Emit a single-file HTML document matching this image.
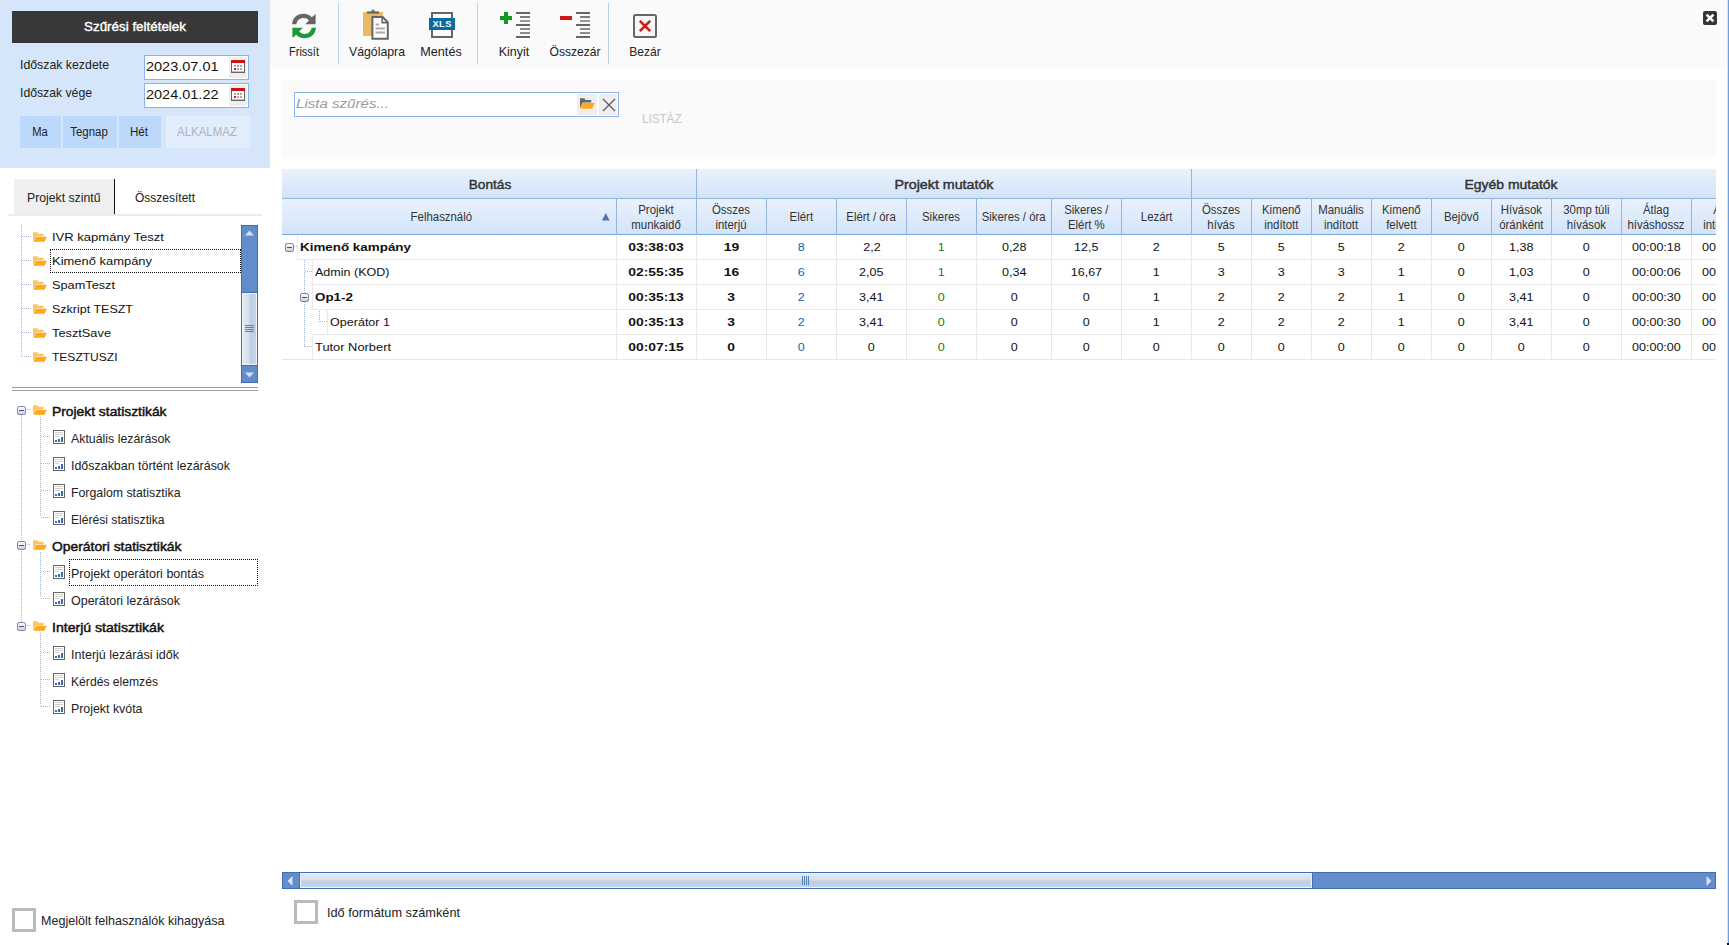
<!DOCTYPE html>
<html><head><meta charset="utf-8"><title>Statisztika</title>
<style>
html,body{margin:0;padding:0;background:#fff;}
body{width:1729px;height:945px;position:relative;overflow:hidden;font-family:"Liberation Sans",sans-serif;color:#222;}
.a{position:absolute;}
.t{position:absolute;white-space:nowrap;line-height:20px;height:20px;display:block;}
.dv{position:absolute;width:1px;background-image:linear-gradient(to bottom,#a9b9d3 1px,transparent 1px);background-size:1px 2px;}
.dh{position:absolute;height:1px;background-image:linear-gradient(to right,#a9b9d3 1px,transparent 1px);background-size:2px 1px;}
.hc{position:absolute;box-sizing:border-box;border-left:1px solid #94b5e0;text-align:center;color:#333;font-size:12px;line-height:15px;display:flex;align-items:center;justify-content:center;}
.dc{position:absolute;box-sizing:border-box;border-left:1px solid #e9e9e9;border-bottom:1px solid #e9e9e9;height:25px;text-align:center;font-size:11.5px;line-height:24px;color:#111;}
.hs{display:inline-block;transform:scaleX(0.95);white-space:nowrap;}
.dc span{display:inline-block;transform:scaleX(1.09);}
.dc.b span{transform:scaleX(1.205);}
.dc.b{font-weight:bold;}
.btn{position:absolute;background:#bcd8fa;}
</style></head><body>

<div class="a" style="left:0;top:0;width:270px;height:168px;background:#d5e6fb;"></div>
<div class="a" style="left:12px;top:11px;width:246px;height:32px;background:#383838;"></div>
<span id="title" class="t " style="font-size:13.5px;color:#fff;-webkit-text-stroke:0.4px #fff;left:134.5px;top:17.4px;transform-origin:0 50%;transform:translateX(-50%) scaleX(0.9921);transform-origin:50% 50%;">Szűrési feltételek</span>
<span id="lab1" class="t " style="font-size:13px;left:20px;top:55.0px;transform-origin:0 50%;transform:scaleX(0.9473);">Időszak kezdete</span>
<span id="lab2" class="t " style="font-size:13px;left:20px;top:83.0px;transform-origin:0 50%;transform:scaleX(0.9398);">Időszak vége</span>
<div class="a" style="left:144px;top:55px;width:103px;height:23px;border:1px solid #8ab3e8;background:#fff;"></div>
<div class="a" style="left:229px;top:57px;width:18px;height:21px;background:#eee;"></div>
<svg class="a" style="left:231px;top:60px" width="14" height="13" viewBox="0 0 14 13"><rect x="0.5" y="0.5" width="13" height="12" fill="#fff" stroke="#666"/><rect x="0" y="0" width="14" height="3" fill="#cc1414"/><rect x="0" y="11.6" width="14" height="1.4" fill="#666"/><g fill="#aaa"><rect x="3" y="5" width="2" height="2"/><rect x="6" y="5" width="2" height="2"/><rect x="9" y="5" width="2" height="2"/><rect x="6" y="8" width="2" height="2"/><rect x="9" y="8" width="2" height="2"/></g><rect x="3" y="8" width="2" height="2" fill="#dd1111"/></svg>
<span id="date0" class="t " style="font-size:12.5px;color:#111;left:146px;top:56.5px;transform-origin:0 50%;transform:scaleX(1.1588);">2023.07.01</span>
<div class="a" style="left:144px;top:83px;width:103px;height:23px;border:1px solid #8ab3e8;background:#fff;"></div>
<div class="a" style="left:229px;top:85px;width:18px;height:21px;background:#eee;"></div>
<svg class="a" style="left:231px;top:88px" width="14" height="13" viewBox="0 0 14 13"><rect x="0.5" y="0.5" width="13" height="12" fill="#fff" stroke="#666"/><rect x="0" y="0" width="14" height="3" fill="#cc1414"/><rect x="0" y="11.6" width="14" height="1.4" fill="#666"/><g fill="#aaa"><rect x="3" y="5" width="2" height="2"/><rect x="6" y="5" width="2" height="2"/><rect x="9" y="5" width="2" height="2"/><rect x="6" y="8" width="2" height="2"/><rect x="9" y="8" width="2" height="2"/></g><rect x="3" y="8" width="2" height="2" fill="#dd1111"/></svg>
<span id="date1" class="t " style="font-size:12.5px;color:#111;left:146px;top:84.5px;transform-origin:0 50%;transform:scaleX(1.1588);">2024.01.22</span>
<div class="btn" style="left:20px;top:116px;width:41px;height:32px;"></div>
<span id="bma" class="t " style="font-size:12.5px;color:#222;left:39.5px;top:122.0px;transform-origin:0 50%;transform:translateX(-50%) scaleX(0.8921);transform-origin:50% 50%;">Ma</span>
<div class="btn" style="left:63px;top:116px;width:54px;height:32px;"></div>
<span id="btg" class="t " style="font-size:12.5px;color:#222;left:89.0px;top:122.0px;transform-origin:0 50%;transform:translateX(-50%) scaleX(0.9143);transform-origin:50% 50%;">Tegnap</span>
<div class="btn" style="left:119px;top:116px;width:42px;height:32px;"></div>
<span id="bhet" class="t " style="font-size:12.5px;color:#222;left:139.0px;top:122.0px;transform-origin:0 50%;transform:translateX(-50%) scaleX(0.9253);transform-origin:50% 50%;">Hét</span>
<div class="btn" style="left:166px;top:116px;width:84px;height:32px;background:#e2edfc;"></div>
<span id="balk" class="t " style="font-size:12.5px;color:#aab4c3;left:207px;top:122.0px;transform-origin:0 50%;transform:translateX(-50%) scaleX(0.9187);transform-origin:50% 50%;">ALKALMAZ</span>
<div class="a" style="left:14px;top:179px;width:100px;height:35px;background:#efefef;"></div>
<div class="a" style="left:114px;top:179px;width:1px;height:35px;background:#111;"></div>
<div class="a" style="left:8px;top:214px;width:254px;height:2px;background:#ececec;"></div>
<span id="tab1" class="t " style="font-size:13px;left:27px;top:187.5px;transform-origin:0 50%;transform:scaleX(0.9417);">Projekt szintű</span>
<span id="tab2" class="t " style="font-size:13px;left:135px;top:187.5px;transform-origin:0 50%;transform:scaleX(0.9226);">Összesített</span>
<div class="dv" style="left:21px;top:225px;height:132px;"></div>
<div class="dh" style="left:22px;top:236px;width:9px;"></div>
<svg class="a" style="left:33px;top:232px" width="14.2" height="10.2" preserveAspectRatio="none" viewBox="0 0 15 11"><path d="M0 0.3 H4.6 L5.2 2 H11.2 V4.6 H2.8 L0 10 Z" fill="#ffc45a"/><path d="M2.9 5 H14.6 L12.2 10.4 H0.4 Z" fill="#ffa81c"/></svg>
<span id="pt0" class="t " style="font-size:11.5px;color:#111;left:52px;top:227.0px;transform-origin:0 50%;transform:scaleX(1.1329);">IVR kapmány Teszt</span>
<div class="dh" style="left:22px;top:260px;width:9px;"></div>
<svg class="a" style="left:33px;top:256px" width="14.2" height="10.2" preserveAspectRatio="none" viewBox="0 0 15 11"><path d="M0 0.3 H4.6 L5.2 2 H11.2 V4.6 H2.8 L0 10 Z" fill="#ffc45a"/><path d="M2.9 5 H14.6 L12.2 10.4 H0.4 Z" fill="#ffa81c"/></svg>
<span id="pt1" class="t " style="font-size:11.5px;color:#111;left:52px;top:251.0px;transform-origin:0 50%;transform:scaleX(1.1254);">Kimenő kampány</span>
<div class="dh" style="left:22px;top:284px;width:9px;"></div>
<svg class="a" style="left:33px;top:280px" width="14.2" height="10.2" preserveAspectRatio="none" viewBox="0 0 15 11"><path d="M0 0.3 H4.6 L5.2 2 H11.2 V4.6 H2.8 L0 10 Z" fill="#ffc45a"/><path d="M2.9 5 H14.6 L12.2 10.4 H0.4 Z" fill="#ffa81c"/></svg>
<span id="pt2" class="t " style="font-size:11.5px;color:#111;left:52px;top:275.0px;transform-origin:0 50%;transform:scaleX(1.1074);">SpamTeszt</span>
<div class="dh" style="left:22px;top:308px;width:9px;"></div>
<svg class="a" style="left:33px;top:304px" width="14.2" height="10.2" preserveAspectRatio="none" viewBox="0 0 15 11"><path d="M0 0.3 H4.6 L5.2 2 H11.2 V4.6 H2.8 L0 10 Z" fill="#ffc45a"/><path d="M2.9 5 H14.6 L12.2 10.4 H0.4 Z" fill="#ffa81c"/></svg>
<span id="pt3" class="t " style="font-size:11.5px;color:#111;left:52px;top:299.0px;transform-origin:0 50%;transform:scaleX(1.0863);">Szkript TESZT</span>
<div class="dh" style="left:22px;top:332px;width:9px;"></div>
<svg class="a" style="left:33px;top:328px" width="14.2" height="10.2" preserveAspectRatio="none" viewBox="0 0 15 11"><path d="M0 0.3 H4.6 L5.2 2 H11.2 V4.6 H2.8 L0 10 Z" fill="#ffc45a"/><path d="M2.9 5 H14.6 L12.2 10.4 H0.4 Z" fill="#ffa81c"/></svg>
<span id="pt4" class="t " style="font-size:11.5px;color:#111;left:52px;top:323.0px;transform-origin:0 50%;transform:scaleX(1.1119);">TesztSave</span>
<div class="dh" style="left:22px;top:356px;width:9px;"></div>
<svg class="a" style="left:33px;top:352px" width="14.2" height="10.2" preserveAspectRatio="none" viewBox="0 0 15 11"><path d="M0 0.3 H4.6 L5.2 2 H11.2 V4.6 H2.8 L0 10 Z" fill="#ffc45a"/><path d="M2.9 5 H14.6 L12.2 10.4 H0.4 Z" fill="#ffa81c"/></svg>
<span id="pt5" class="t " style="font-size:11.5px;color:#111;left:52px;top:347.0px;transform-origin:0 50%;transform:scaleX(1.0459);">TESZTUSZI</span>
<div class="a" style="left:50px;top:249px;width:189px;height:22px;border:1px dotted #111;"></div>
<div class="a" style="left:241px;top:225px;width:17px;height:158px;background:#638ccb;box-shadow:inset 0 0 0 1px #416db3;"></div>
<div class="a" style="left:241px;top:292px;width:17px;height:74px;background:#416db3;"></div>
<div class="a" style="left:242px;top:293px;width:15px;height:72px;background:linear-gradient(to right,#e2e9f3 0%,#d6e0ed 46%,#bfcfe3 54%,#c4d3e6 100%);box-shadow:inset 0 0 0 1px #eef2f8;"></div>
<svg class="a" style="left:245px;top:325px" width="9" height="8" viewBox="0 0 9 8"><path d="M0 0.5H9M0 2.5H9M0 4.5H9M0 6.5H9" stroke="#5b7fb8" stroke-width="1"/></svg>
<svg class="a" style="left:245px;top:230px" width="9" height="6" viewBox="0 0 9 6"><path d="M0 5.5 L4.5 0.5 L9 5.5 Z" fill="#d6e2f3"/></svg>
<svg class="a" style="left:245px;top:372px" width="9" height="6" viewBox="0 0 9 6"><path d="M0 0.5 L4.5 5.5 L9 0.5 Z" fill="#d6e2f3"/></svg>
<div class="a" style="left:12px;top:387px;width:246px;height:1px;background:#9a9a9a;"></div>
<div class="a" style="left:12px;top:390px;width:246px;height:1px;background:#a2a2a2;"></div>
<div class="dv" style="left:21px;top:415px;height:208px;"></div>
<svg class="a" style="left:17px;top:406px" width="9" height="9" viewBox="0 0 9 9"><defs><linearGradient id="cg1" x1="0" y1="0" x2="0" y2="1"><stop offset="0" stop-color="#fff"/><stop offset="1" stop-color="#c9cfe0"/></linearGradient></defs><rect x="0.5" y="0.5" width="8" height="8" rx="1.6" fill="url(#cg1)" stroke="#7c86a6"/><rect x="2" y="4" width="5" height="1" fill="#4a5274"/></svg>
<div class="dh" style="left:27px;top:409px;width:4px;"></div>
<svg class="a" style="left:33px;top:405px" width="14.2" height="10.2" preserveAspectRatio="none" viewBox="0 0 15 11"><path d="M0 0.3 H4.6 L5.2 2 H11.2 V4.6 H2.8 L0 10 Z" fill="#ffc45a"/><path d="M2.9 5 H14.6 L12.2 10.4 H0.4 Z" fill="#ffa81c"/></svg>
<span id="st0" class="t " style="font-size:13px;color:#111;-webkit-text-stroke:0.45px #111;left:52px;top:402.0px;transform-origin:0 50%;transform:scaleX(1.0636);">Projekt statisztikák</span>
<div class="dh" style="left:41px;top:436px;width:9px;"></div>
<svg class="a" style="left:53px;top:430px" width="12" height="14" viewBox="0 0 12 14"><rect x="0.5" y="0.5" width="11" height="13" fill="#fff" stroke="#666"/><path d="M2 2.5H10M2 4.5H10M2 6.5H6" stroke="#d0d0d0"/><rect x="2" y="10" width="2" height="2" fill="#3a6db3"/><rect x="5" y="9" width="2" height="3" fill="#3a6db3"/><rect x="8" y="7" width="2" height="5" fill="#3a6db3"/></svg>
<span id="st1" class="t " style="font-size:13px;color:#222;left:71px;top:429.0px;transform-origin:0 50%;transform:scaleX(0.9496);">Aktuális lezárások</span>
<div class="dh" style="left:41px;top:463px;width:9px;"></div>
<svg class="a" style="left:53px;top:457px" width="12" height="14" viewBox="0 0 12 14"><rect x="0.5" y="0.5" width="11" height="13" fill="#fff" stroke="#666"/><path d="M2 2.5H10M2 4.5H10M2 6.5H6" stroke="#d0d0d0"/><rect x="2" y="10" width="2" height="2" fill="#3a6db3"/><rect x="5" y="9" width="2" height="3" fill="#3a6db3"/><rect x="8" y="7" width="2" height="5" fill="#3a6db3"/></svg>
<span id="st2" class="t " style="font-size:13px;color:#222;left:71px;top:456.0px;transform-origin:0 50%;transform:scaleX(0.9566);">Időszakban történt lezárások</span>
<div class="dh" style="left:41px;top:490px;width:9px;"></div>
<svg class="a" style="left:53px;top:484px" width="12" height="14" viewBox="0 0 12 14"><rect x="0.5" y="0.5" width="11" height="13" fill="#fff" stroke="#666"/><path d="M2 2.5H10M2 4.5H10M2 6.5H6" stroke="#d0d0d0"/><rect x="2" y="10" width="2" height="2" fill="#3a6db3"/><rect x="5" y="9" width="2" height="3" fill="#3a6db3"/><rect x="8" y="7" width="2" height="5" fill="#3a6db3"/></svg>
<span id="st3" class="t " style="font-size:13px;color:#222;left:71px;top:483.0px;transform-origin:0 50%;transform:scaleX(0.9473);">Forgalom statisztika</span>
<div class="dh" style="left:41px;top:517px;width:9px;"></div>
<svg class="a" style="left:53px;top:511px" width="12" height="14" viewBox="0 0 12 14"><rect x="0.5" y="0.5" width="11" height="13" fill="#fff" stroke="#666"/><path d="M2 2.5H10M2 4.5H10M2 6.5H6" stroke="#d0d0d0"/><rect x="2" y="10" width="2" height="2" fill="#3a6db3"/><rect x="5" y="9" width="2" height="3" fill="#3a6db3"/><rect x="8" y="7" width="2" height="5" fill="#3a6db3"/></svg>
<span id="st4" class="t " style="font-size:13px;color:#222;left:71px;top:510.0px;transform-origin:0 50%;transform:scaleX(0.9311);">Elérési statisztika</span>
<svg class="a" style="left:17px;top:541px" width="9" height="9" viewBox="0 0 9 9"><defs><linearGradient id="cg2" x1="0" y1="0" x2="0" y2="1"><stop offset="0" stop-color="#fff"/><stop offset="1" stop-color="#c9cfe0"/></linearGradient></defs><rect x="0.5" y="0.5" width="8" height="8" rx="1.6" fill="url(#cg2)" stroke="#7c86a6"/><rect x="2" y="4" width="5" height="1" fill="#4a5274"/></svg>
<div class="dh" style="left:27px;top:544px;width:4px;"></div>
<svg class="a" style="left:33px;top:540px" width="14.2" height="10.2" preserveAspectRatio="none" viewBox="0 0 15 11"><path d="M0 0.3 H4.6 L5.2 2 H11.2 V4.6 H2.8 L0 10 Z" fill="#ffc45a"/><path d="M2.9 5 H14.6 L12.2 10.4 H0.4 Z" fill="#ffa81c"/></svg>
<span id="st5" class="t " style="font-size:13px;color:#111;-webkit-text-stroke:0.45px #111;left:52px;top:537.0px;transform-origin:0 50%;transform:scaleX(1.0669);">Operátori statisztikák</span>
<div class="dh" style="left:41px;top:571px;width:9px;"></div>
<svg class="a" style="left:53px;top:565px" width="12" height="14" viewBox="0 0 12 14"><rect x="0.5" y="0.5" width="11" height="13" fill="#fff" stroke="#666"/><path d="M2 2.5H10M2 4.5H10M2 6.5H6" stroke="#d0d0d0"/><rect x="2" y="10" width="2" height="2" fill="#3a6db3"/><rect x="5" y="9" width="2" height="3" fill="#3a6db3"/><rect x="8" y="7" width="2" height="5" fill="#3a6db3"/></svg>
<span id="st6" class="t " style="font-size:13px;color:#222;left:71px;top:564.0px;transform-origin:0 50%;transform:scaleX(0.9635);">Projekt operátori bontás</span>
<div class="dh" style="left:41px;top:598px;width:9px;"></div>
<svg class="a" style="left:53px;top:592px" width="12" height="14" viewBox="0 0 12 14"><rect x="0.5" y="0.5" width="11" height="13" fill="#fff" stroke="#666"/><path d="M2 2.5H10M2 4.5H10M2 6.5H6" stroke="#d0d0d0"/><rect x="2" y="10" width="2" height="2" fill="#3a6db3"/><rect x="5" y="9" width="2" height="3" fill="#3a6db3"/><rect x="8" y="7" width="2" height="5" fill="#3a6db3"/></svg>
<span id="st7" class="t " style="font-size:13px;color:#222;left:71px;top:591.0px;transform-origin:0 50%;transform:scaleX(0.9607);">Operátori lezárások</span>
<svg class="a" style="left:17px;top:622px" width="9" height="9" viewBox="0 0 9 9"><defs><linearGradient id="cg3" x1="0" y1="0" x2="0" y2="1"><stop offset="0" stop-color="#fff"/><stop offset="1" stop-color="#c9cfe0"/></linearGradient></defs><rect x="0.5" y="0.5" width="8" height="8" rx="1.6" fill="url(#cg3)" stroke="#7c86a6"/><rect x="2" y="4" width="5" height="1" fill="#4a5274"/></svg>
<div class="dh" style="left:27px;top:625px;width:4px;"></div>
<svg class="a" style="left:33px;top:621px" width="14.2" height="10.2" preserveAspectRatio="none" viewBox="0 0 15 11"><path d="M0 0.3 H4.6 L5.2 2 H11.2 V4.6 H2.8 L0 10 Z" fill="#ffc45a"/><path d="M2.9 5 H14.6 L12.2 10.4 H0.4 Z" fill="#ffa81c"/></svg>
<span id="st8" class="t " style="font-size:13px;color:#111;-webkit-text-stroke:0.45px #111;left:52px;top:618.0px;transform-origin:0 50%;transform:scaleX(1.0839);">Interjú statisztikák</span>
<div class="dh" style="left:41px;top:652px;width:9px;"></div>
<svg class="a" style="left:53px;top:646px" width="12" height="14" viewBox="0 0 12 14"><rect x="0.5" y="0.5" width="11" height="13" fill="#fff" stroke="#666"/><path d="M2 2.5H10M2 4.5H10M2 6.5H6" stroke="#d0d0d0"/><rect x="2" y="10" width="2" height="2" fill="#3a6db3"/><rect x="5" y="9" width="2" height="3" fill="#3a6db3"/><rect x="8" y="7" width="2" height="5" fill="#3a6db3"/></svg>
<span id="st9" class="t " style="font-size:13px;color:#222;left:71px;top:645.0px;transform-origin:0 50%;transform:scaleX(0.9643);">Interjú lezárási idők</span>
<div class="dh" style="left:41px;top:679px;width:9px;"></div>
<svg class="a" style="left:53px;top:673px" width="12" height="14" viewBox="0 0 12 14"><rect x="0.5" y="0.5" width="11" height="13" fill="#fff" stroke="#666"/><path d="M2 2.5H10M2 4.5H10M2 6.5H6" stroke="#d0d0d0"/><rect x="2" y="10" width="2" height="2" fill="#3a6db3"/><rect x="5" y="9" width="2" height="3" fill="#3a6db3"/><rect x="8" y="7" width="2" height="5" fill="#3a6db3"/></svg>
<span id="st10" class="t " style="font-size:13px;color:#222;left:71px;top:672.0px;transform-origin:0 50%;transform:scaleX(0.9333);">Kérdés elemzés</span>
<div class="dh" style="left:41px;top:706px;width:9px;"></div>
<svg class="a" style="left:53px;top:700px" width="12" height="14" viewBox="0 0 12 14"><rect x="0.5" y="0.5" width="11" height="13" fill="#fff" stroke="#666"/><path d="M2 2.5H10M2 4.5H10M2 6.5H6" stroke="#d0d0d0"/><rect x="2" y="10" width="2" height="2" fill="#3a6db3"/><rect x="5" y="9" width="2" height="3" fill="#3a6db3"/><rect x="8" y="7" width="2" height="5" fill="#3a6db3"/></svg>
<span id="st11" class="t " style="font-size:13px;color:#222;left:71px;top:699.0px;transform-origin:0 50%;transform:scaleX(0.9514);">Projekt kvóta</span>
<div class="dv" style="left:40px;top:417px;height:100px;"></div>
<div class="dv" style="left:40px;top:552px;height:46px;"></div>
<div class="dv" style="left:40px;top:633px;height:73px;"></div>
<div class="a" style="left:69px;top:559px;width:187px;height:25px;border:1px dotted #111;"></div>
<div class="a" style="left:12px;top:908px;width:18px;height:18px;border:3px solid #bababa;background:#fff;"></div>
<span id="cb1" class="t " style="font-size:13px;color:#222;left:41px;top:910.5px;transform-origin:0 50%;transform:scaleX(0.9655);">Megjelölt felhasználók kihagyása</span>
<div class="a" style="left:270px;top:0;width:1457px;height:68px;background:#fafafa;"></div>
<div class="a" style="left:338px;top:3px;width:1px;height:61px;background:#b9cfea;"></div>
<div class="a" style="left:477px;top:3px;width:1px;height:61px;background:#b9cfea;"></div>
<div class="a" style="left:608px;top:3px;width:1px;height:61px;background:#b9cfea;"></div>
<span id="tb1" class="t " style="font-size:13px;color:#222;left:304px;top:41.5px;transform-origin:0 50%;transform:translateX(-50%) scaleX(0.8477);transform-origin:50% 50%;">Frissít</span>
<span id="tb2" class="t " style="font-size:13px;color:#222;left:377px;top:41.5px;transform-origin:0 50%;transform:translateX(-50%) scaleX(0.9446);transform-origin:50% 50%;">Vágólapra</span>
<span id="tb3" class="t " style="font-size:13px;color:#222;left:440.7px;top:41.5px;transform-origin:0 50%;transform:translateX(-50%) scaleX(0.9733);transform-origin:50% 50%;">Mentés</span>
<span id="tb4" class="t " style="font-size:13px;color:#222;left:514.2px;top:41.5px;transform-origin:0 50%;transform:translateX(-50%) scaleX(0.9592);transform-origin:50% 50%;">Kinyit</span>
<span id="tb5" class="t " style="font-size:13px;color:#222;left:574.5px;top:41.5px;transform-origin:0 50%;transform:translateX(-50%) scaleX(0.9289);transform-origin:50% 50%;">Összezár</span>
<span id="tb6" class="t " style="font-size:13px;color:#222;left:644.7px;top:41.5px;transform-origin:0 50%;transform:translateX(-50%) scaleX(0.9273);transform-origin:50% 50%;">Bezár</span>
<svg class="a" style="left:291px;top:13px" width="26" height="26" viewBox="0 0 26 26">
<path transform="translate(0,-0.7)" d="M1 12 C1.5 5.5 6.5 1.5 12.5 1.5 C16 1.5 18.8 2.8 20.8 5 L24.6 1.6 V12 H14.2 L17.9 8.1 C16.4 6.6 14.6 5.8 12.5 5.8 C8.8 5.8 6 8.3 5.4 12 Z" fill="#666"/>
<path transform="translate(0,0.7)" d="M25 14 C24.5 20.5 19.5 24.5 13.5 24.5 C10 24.5 7.2 23.2 5.2 21 L1.4 24.4 V14 H11.8 L8.1 17.9 C9.6 19.4 11.4 20.2 13.5 20.2 C17.2 20.2 20 17.7 20.6 14 Z" fill="#1c9a3a"/>
</svg>
<svg class="a" style="left:362px;top:9px" width="28" height="32" viewBox="0 0 28 32">
<rect x="1" y="3" width="20" height="24" fill="#e9b964"/>
<rect x="5" y="2.4" width="12" height="2.2" fill="#666"/><rect x="9.6" y="0.8" width="2.8" height="2.4" fill="#666"/>
<path d="M10.4 8 H20.6 L25.8 13.2 V29.8 H10.4 Z" fill="#fff" stroke="#666" stroke-width="2"/>
<path d="M20.2 8.4 V13.6 H25.6" fill="none" stroke="#666" stroke-width="1.6"/>
<path d="M13.5 15.5H17M13.5 19.5H23M13.5 23.5H23" stroke="#aaa" stroke-width="2"/>
</svg>
<svg class="a" style="left:428px;top:11px" width="28" height="28" viewBox="0 0 28 28">
<rect x="4" y="2" width="20" height="24" fill="#fafafa" stroke="#666" stroke-width="2"/>
<rect x="1" y="7" width="26" height="12" fill="#0b6a9f"/>
<text x="14.2" y="16.4" text-anchor="middle" font-family="Liberation Sans, sans-serif" font-weight="bold" font-size="9.3" fill="#fff" letter-spacing="0.5">XLS</text>
</svg>
<svg class="a" style="left:500px;top:12px" width="31" height="26" viewBox="0 0 31 26"><rect x="4" y="0" width="4" height="12" fill="#149a22"/><rect x="0" y="4" width="12" height="4" fill="#149a22"/><g><rect x="16" y="0" width="14" height="2" fill="#666"/><rect x="20" y="4" width="10" height="2" fill="#7d7d7d"/><rect x="20" y="8" width="10" height="2" fill="#9a9a9a"/><rect x="16" y="12" width="14" height="2" fill="#666"/><rect x="20" y="16" width="10" height="2" fill="#8a8a8a"/><rect x="20" y="20" width="10" height="2" fill="#8a8a8a"/><rect x="16" y="24" width="14" height="2" fill="#666"/></g></svg>
<svg class="a" style="left:560px;top:12px" width="31" height="26" viewBox="0 0 31 26"><rect x="0" y="4" width="12" height="4" fill="#d01818"/><g><rect x="16" y="0" width="14" height="2" fill="#666"/><rect x="20" y="4" width="10" height="2" fill="#7d7d7d"/><rect x="20" y="8" width="10" height="2" fill="#9a9a9a"/><rect x="16" y="12" width="14" height="2" fill="#666"/><rect x="20" y="16" width="10" height="2" fill="#8a8a8a"/><rect x="20" y="20" width="10" height="2" fill="#8a8a8a"/><rect x="16" y="24" width="14" height="2" fill="#666"/></g></svg>
<svg class="a" style="left:633px;top:14px" width="24" height="24" viewBox="0 0 24 24"><rect x="1" y="1" width="22" height="22" rx="1.5" fill="#f7f7f7" stroke="#666" stroke-width="2"/><path d="M6.8 6.8 L17.2 17.2 M17.2 6.8 L6.8 17.2" stroke="#cc1a1a" stroke-width="2.6"/></svg>
<svg class="a" style="left:1703px;top:11px" width="14" height="14" viewBox="0 0 14 14"><rect width="14" height="14" rx="2" fill="#363636"/><path d="M3.6 3.6 L10.4 10.4 M10.4 3.6 L3.6 10.4" stroke="#fff" stroke-width="2.6"/></svg>
<div class="a" style="left:1727px;top:0;width:1px;height:945px;background:#d9e5f6;"></div>
<div class="a" style="left:1728px;top:0;width:1px;height:945px;background:#6f9fdb;"></div>
<div class="a" style="left:282px;top:80px;width:1434px;height:77px;background:#fafafa;"></div>
<div class="a" style="left:294px;top:92px;width:323px;height:23px;border:1px solid #8ab3e8;background:#fff;"></div>
<span id="flt" class="t " style="font-size:12.5px;color:#9a9a9a;font-style:italic;left:296px;top:94.0px;transform-origin:0 50%;transform:scaleX(1.2058);">Lista szűrés...</span>
<div class="a" style="left:577px;top:94px;width:20px;height:21px;background:#eee;"></div>
<div class="a" style="left:599px;top:94px;width:18px;height:21px;background:#eee;"></div>
<svg class="a" style="left:580px;top:98px" width="15" height="12" viewBox="0 0 15 12"><path d="M0 0.3 H4.6 L5.2 2 H11.2 V4.6 H2.8 L0 10 Z" fill="#666"/><path d="M2.9 5 H14.6 L12.2 10.8 H0.4 Z" fill="#ffa81c"/></svg>
<svg class="a" style="left:602px;top:98px" width="14" height="14" viewBox="0 0 14 14"><path d="M1 1 L13 13 M13 1 L1 13" stroke="#5c5c5c" stroke-width="1.3"/></svg>
<span id="listaz" class="t " style="font-size:12.5px;color:#c4c8cc;left:641.7px;top:108.8px;transform-origin:0 50%;transform:scaleX(0.9322);">LISTÁZ</span>
<div class="a" style="left:282px;top:169px;width:1434px;height:66px;overflow:hidden;">
<div class="a" style="left:0;top:0;width:1434px;height:30px;background:linear-gradient(to bottom,#e9f2fc 0%,#dbe9fa 60%,#d2e3f8 100%);"></div>
<div class="a" style="left:0;top:30px;width:1434px;height:36px;background:linear-gradient(to bottom,#e9f2fc 0%,#dbe9fa 60%,#d2e3f8 100%);"></div>
<div class="a" style="left:0;top:29px;width:1434px;height:1px;background:#94b5e0;"></div>
<div class="a" style="left:0;top:65px;width:1434px;height:1px;background:#7fa6da;"></div>
<div class="hc" style="left:0px;top:0;width:414px;height:30px;border-left:none;"></div>
<div class="hc" style="left:414px;top:0;width:495px;height:30px;"></div>
<div class="hc" style="left:909px;top:0;width:638px;height:30px;"></div>
<div class="hc" style="left:0px;top:30px;width:334px;height:36px;padding-top:1px;border-left:none;padding-right:16px;"><span class="hs">Felhasználó</span></div>
<div class="hc" style="left:334px;top:30px;width:80px;height:36px;padding-top:2px;"><span class="hs">Projekt<br>munkaidő</span></div>
<div class="hc" style="left:414px;top:30px;width:70px;height:36px;padding-top:2px;"><span class="hs">Összes<br>interjú</span></div>
<div class="hc" style="left:484px;top:30px;width:70px;height:36px;padding-top:1px;"><span class="hs">Elért</span></div>
<div class="hc" style="left:554px;top:30px;width:70px;height:36px;padding-top:1px;"><span class="hs">Elért / óra</span></div>
<div class="hc" style="left:624px;top:30px;width:70px;height:36px;padding-top:1px;"><span class="hs">Sikeres</span></div>
<div class="hc" style="left:694px;top:30px;width:75px;height:36px;padding-top:1px;"><span class="hs">Sikeres / óra</span></div>
<div class="hc" style="left:769px;top:30px;width:70px;height:36px;padding-top:2px;"><span class="hs">Sikeres /<br>Elért %</span></div>
<div class="hc" style="left:839px;top:30px;width:70px;height:36px;padding-top:1px;"><span class="hs">Lezárt</span></div>
<div class="hc" style="left:909px;top:30px;width:60px;height:36px;padding-top:2px;"><span class="hs">Összes<br>hívás</span></div>
<div class="hc" style="left:969px;top:30px;width:60px;height:36px;padding-top:2px;"><span class="hs">Kimenő<br>indított</span></div>
<div class="hc" style="left:1029px;top:30px;width:60px;height:36px;padding-top:2px;"><span class="hs">Manuális<br>indított</span></div>
<div class="hc" style="left:1089px;top:30px;width:60px;height:36px;padding-top:2px;"><span class="hs">Kimenő<br>felvett</span></div>
<div class="hc" style="left:1149px;top:30px;width:60px;height:36px;padding-top:1px;"><span class="hs">Bejövő</span></div>
<div class="hc" style="left:1209px;top:30px;width:60px;height:36px;padding-top:2px;"><span class="hs">Hívások<br>óránként</span></div>
<div class="hc" style="left:1269px;top:30px;width:70px;height:36px;padding-top:2px;"><span class="hs">30mp túli<br>hívások</span></div>
<div class="hc" style="left:1339px;top:30px;width:70px;height:36px;padding-top:2px;"><span class="hs">Átlag<br>híváshossz</span></div>
<div class="hc" style="left:1409px;top:30px;width:70px;height:36px;padding-top:2px;"><span class="hs">Átlag<br>interjúidő</span></div>
<svg class="a" style="left:320px;top:44px" width="8" height="8" viewBox="0 0 8 8"><path d="M0 7.5 L3.8 0 L7.6 7.5 Z" fill="#4f72a8"/></svg>
</div>
<span id="gh1" class="t " style="font-size:13.5px;color:#333;-webkit-text-stroke:0.45px #333;left:489.5px;top:174.5px;transform-origin:0 50%;transform:translateX(-50%) scaleX(1.0112);transform-origin:50% 50%;">Bontás</span>
<span id="gh2" class="t " style="font-size:13.5px;color:#333;-webkit-text-stroke:0.45px #333;left:944px;top:174.5px;transform-origin:0 50%;transform:translateX(-50%) scaleX(1.0555);transform-origin:50% 50%;">Projekt mutatók</span>
<span id="gh3" class="t " style="font-size:13.5px;color:#333;-webkit-text-stroke:0.45px #333;left:1511.4px;top:174.5px;transform-origin:0 50%;transform:translateX(-50%) scaleX(1.0326);transform-origin:50% 50%;">Egyéb mutatók</span>
<div class="a" style="left:282px;top:235px;width:1434px;height:125px;overflow:hidden;">
<div class="dv" style="left:22px;top:25px;height:87px;"></div>
<div class="dh" style="left:23px;top:36px;width:7px;"></div>
<div class="dh" style="left:23px;top:111px;width:7px;"></div>
<div class="dv" style="left:37px;top:76px;height:11px;"></div>
<div class="dh" style="left:38px;top:86px;width:7px;"></div>
<div class="dc" style="left:15px;top:0px;width:319px;"></div>
<svg class="a" style="left:3px;top:8px" width="9" height="9" viewBox="0 0 9 9"><defs><linearGradient id="cg4" x1="0" y1="0" x2="0" y2="1"><stop offset="0" stop-color="#fff"/><stop offset="1" stop-color="#c9cfe0"/></linearGradient></defs><rect x="0.5" y="0.5" width="8" height="8" rx="1.6" fill="url(#cg4)" stroke="#7c86a6"/><rect x="2" y="4" width="5" height="1" fill="#4a5274"/></svg>
<div class="dc b" style="left:334px;top:0px;width:80px;"><span>03:38:03</span></div>
<div class="dc b" style="left:414px;top:0px;width:70px;"><span>19</span></div>
<div class="dc" style="left:484px;top:0px;width:70px;color:#1a5fb4;"><span>8</span></div>
<div class="dc" style="left:554px;top:0px;width:70px;"><span>2,2</span></div>
<div class="dc" style="left:624px;top:0px;width:70px;color:#1a7a1a;"><span>1</span></div>
<div class="dc" style="left:694px;top:0px;width:75px;"><span>0,28</span></div>
<div class="dc" style="left:769px;top:0px;width:70px;"><span>12,5</span></div>
<div class="dc" style="left:839px;top:0px;width:70px;"><span>2</span></div>
<div class="dc" style="left:909px;top:0px;width:60px;"><span>5</span></div>
<div class="dc" style="left:969px;top:0px;width:60px;"><span>5</span></div>
<div class="dc" style="left:1029px;top:0px;width:60px;"><span>5</span></div>
<div class="dc" style="left:1089px;top:0px;width:60px;"><span>2</span></div>
<div class="dc" style="left:1149px;top:0px;width:60px;"><span>0</span></div>
<div class="dc" style="left:1209px;top:0px;width:60px;"><span>1,38</span></div>
<div class="dc" style="left:1269px;top:0px;width:70px;"><span>0</span></div>
<div class="dc" style="left:1339px;top:0px;width:70px;"><span>00:00:18</span></div>
<div class="dc" style="left:1409px;top:0px;width:70px;"><span>00:00:00</span></div>
<div class="dc" style="left:30px;top:25px;width:304px;"></div>
<div class="dc b" style="left:334px;top:25px;width:80px;"><span>02:55:35</span></div>
<div class="dc b" style="left:414px;top:25px;width:70px;"><span>16</span></div>
<div class="dc" style="left:484px;top:25px;width:70px;color:#1a5fb4;"><span>6</span></div>
<div class="dc" style="left:554px;top:25px;width:70px;"><span>2,05</span></div>
<div class="dc" style="left:624px;top:25px;width:70px;color:#1a7a1a;"><span>1</span></div>
<div class="dc" style="left:694px;top:25px;width:75px;"><span>0,34</span></div>
<div class="dc" style="left:769px;top:25px;width:70px;"><span>16,67</span></div>
<div class="dc" style="left:839px;top:25px;width:70px;"><span>1</span></div>
<div class="dc" style="left:909px;top:25px;width:60px;"><span>3</span></div>
<div class="dc" style="left:969px;top:25px;width:60px;"><span>3</span></div>
<div class="dc" style="left:1029px;top:25px;width:60px;"><span>3</span></div>
<div class="dc" style="left:1089px;top:25px;width:60px;"><span>1</span></div>
<div class="dc" style="left:1149px;top:25px;width:60px;"><span>0</span></div>
<div class="dc" style="left:1209px;top:25px;width:60px;"><span>1,03</span></div>
<div class="dc" style="left:1269px;top:25px;width:70px;"><span>0</span></div>
<div class="dc" style="left:1339px;top:25px;width:70px;"><span>00:00:06</span></div>
<div class="dc" style="left:1409px;top:25px;width:70px;"><span>00:00:00</span></div>
<div class="dc" style="left:30px;top:50px;width:304px;"></div>
<svg class="a" style="left:18px;top:58px" width="9" height="9" viewBox="0 0 9 9"><defs><linearGradient id="cg5" x1="0" y1="0" x2="0" y2="1"><stop offset="0" stop-color="#fff"/><stop offset="1" stop-color="#c9cfe0"/></linearGradient></defs><rect x="0.5" y="0.5" width="8" height="8" rx="1.6" fill="url(#cg5)" stroke="#7c86a6"/><rect x="2" y="4" width="5" height="1" fill="#4a5274"/></svg>
<div class="dc b" style="left:334px;top:50px;width:80px;"><span>00:35:13</span></div>
<div class="dc b" style="left:414px;top:50px;width:70px;"><span>3</span></div>
<div class="dc" style="left:484px;top:50px;width:70px;color:#1a5fb4;"><span>2</span></div>
<div class="dc" style="left:554px;top:50px;width:70px;"><span>3,41</span></div>
<div class="dc" style="left:624px;top:50px;width:70px;color:#1a7a1a;"><span>0</span></div>
<div class="dc" style="left:694px;top:50px;width:75px;"><span>0</span></div>
<div class="dc" style="left:769px;top:50px;width:70px;"><span>0</span></div>
<div class="dc" style="left:839px;top:50px;width:70px;"><span>1</span></div>
<div class="dc" style="left:909px;top:50px;width:60px;"><span>2</span></div>
<div class="dc" style="left:969px;top:50px;width:60px;"><span>2</span></div>
<div class="dc" style="left:1029px;top:50px;width:60px;"><span>2</span></div>
<div class="dc" style="left:1089px;top:50px;width:60px;"><span>1</span></div>
<div class="dc" style="left:1149px;top:50px;width:60px;"><span>0</span></div>
<div class="dc" style="left:1209px;top:50px;width:60px;"><span>3,41</span></div>
<div class="dc" style="left:1269px;top:50px;width:70px;"><span>0</span></div>
<div class="dc" style="left:1339px;top:50px;width:70px;"><span>00:00:30</span></div>
<div class="dc" style="left:1409px;top:50px;width:70px;"><span>00:00:00</span></div>
<div class="dc" style="left:45px;top:75px;width:289px;"></div>
<div class="dc b" style="left:334px;top:75px;width:80px;"><span>00:35:13</span></div>
<div class="dc b" style="left:414px;top:75px;width:70px;"><span>3</span></div>
<div class="dc" style="left:484px;top:75px;width:70px;color:#1a5fb4;"><span>2</span></div>
<div class="dc" style="left:554px;top:75px;width:70px;"><span>3,41</span></div>
<div class="dc" style="left:624px;top:75px;width:70px;color:#1a7a1a;"><span>0</span></div>
<div class="dc" style="left:694px;top:75px;width:75px;"><span>0</span></div>
<div class="dc" style="left:769px;top:75px;width:70px;"><span>0</span></div>
<div class="dc" style="left:839px;top:75px;width:70px;"><span>1</span></div>
<div class="dc" style="left:909px;top:75px;width:60px;"><span>2</span></div>
<div class="dc" style="left:969px;top:75px;width:60px;"><span>2</span></div>
<div class="dc" style="left:1029px;top:75px;width:60px;"><span>2</span></div>
<div class="dc" style="left:1089px;top:75px;width:60px;"><span>1</span></div>
<div class="dc" style="left:1149px;top:75px;width:60px;"><span>0</span></div>
<div class="dc" style="left:1209px;top:75px;width:60px;"><span>3,41</span></div>
<div class="dc" style="left:1269px;top:75px;width:70px;"><span>0</span></div>
<div class="dc" style="left:1339px;top:75px;width:70px;"><span>00:00:30</span></div>
<div class="dc" style="left:1409px;top:75px;width:70px;"><span>00:00:00</span></div>
<div class="dc" style="left:30px;top:100px;width:304px;"></div>
<div class="dc b" style="left:334px;top:100px;width:80px;"><span>00:07:15</span></div>
<div class="dc b" style="left:414px;top:100px;width:70px;"><span>0</span></div>
<div class="dc" style="left:484px;top:100px;width:70px;color:#1a5fb4;"><span>0</span></div>
<div class="dc" style="left:554px;top:100px;width:70px;"><span>0</span></div>
<div class="dc" style="left:624px;top:100px;width:70px;color:#1a7a1a;"><span>0</span></div>
<div class="dc" style="left:694px;top:100px;width:75px;"><span>0</span></div>
<div class="dc" style="left:769px;top:100px;width:70px;"><span>0</span></div>
<div class="dc" style="left:839px;top:100px;width:70px;"><span>0</span></div>
<div class="dc" style="left:909px;top:100px;width:60px;"><span>0</span></div>
<div class="dc" style="left:969px;top:100px;width:60px;"><span>0</span></div>
<div class="dc" style="left:1029px;top:100px;width:60px;"><span>0</span></div>
<div class="dc" style="left:1089px;top:100px;width:60px;"><span>0</span></div>
<div class="dc" style="left:1149px;top:100px;width:60px;"><span>0</span></div>
<div class="dc" style="left:1209px;top:100px;width:60px;"><span>0</span></div>
<div class="dc" style="left:1269px;top:100px;width:70px;"><span>0</span></div>
<div class="dc" style="left:1339px;top:100px;width:70px;"><span>00:00:00</span></div>
<div class="dc" style="left:1409px;top:100px;width:70px;"><span>00:00:00</span></div>
<div class="a" style="left:30px;top:99px;width:15px;height:1px;background:#e6e6e6;"></div>
<div class="a" style="left:0px;top:124px;width:30px;height:1px;background:#e6e6e6;"></div>
<div class="dh" style="left:12px;top:11px;width:3px;"></div>
</div>
<span id="gr0" class="t " style="font-size:11.5px;color:#111;font-weight:bold;left:299.5px;top:237.0px;transform-origin:0 50%;transform:scaleX(1.1655);">Kimenő kampány</span>
<span id="gr1" class="t " style="font-size:11.5px;color:#111;left:314.5px;top:262.0px;transform-origin:0 50%;transform:scaleX(1.0896);">Admin (KOD)</span>
<span id="gr2" class="t " style="font-size:11.5px;color:#111;font-weight:bold;left:314.5px;top:287.0px;transform-origin:0 50%;transform:scaleX(1.1659);">Op1-2</span>
<span id="gr3" class="t " style="font-size:11.5px;color:#111;left:329.5px;top:312.0px;transform-origin:0 50%;transform:scaleX(1.0912);">Operátor 1</span>
<span id="gr4" class="t " style="font-size:11.5px;color:#111;left:314.5px;top:337.0px;transform-origin:0 50%;transform:scaleX(1.1182);">Tutor Norbert</span>
<div class="a" style="left:282px;top:872px;width:1434px;height:17px;background:#638ccb;box-shadow:inset 0 0 0 1px #416db3;"></div>
<div class="a" style="left:299px;top:872px;width:1014px;height:17px;background:#416db3;"></div>
<div class="a" style="left:300px;top:873px;width:1012px;height:15px;background:linear-gradient(to bottom,#e2e9f3 0%,#d6e0ed 46%,#bfcfe3 54%,#c4d3e6 100%);box-shadow:inset 0 0 0 1px #eef2f8;"></div>
<svg class="a" style="left:802px;top:876px" width="8" height="9" viewBox="0 0 8 9"><path d="M0.5 0V9M2.5 0V9M4.5 0V9M6.5 0V9" stroke="#5b7fb8" stroke-width="1"/></svg>
<svg class="a" style="left:287px;top:876px" width="6" height="10" viewBox="0 0 6 10"><path d="M5.5 0 L0.5 5 L5.5 10 Z" fill="#d6e2f3"/></svg>
<svg class="a" style="left:1706px;top:876px" width="6" height="10" viewBox="0 0 6 10"><path d="M0.5 0 L5.5 5 L0.5 10 Z" fill="#d6e2f3"/></svg>
<div class="a" style="left:294px;top:900px;width:18px;height:18px;border:3px solid #bababa;background:#fff;"></div>
<span id="cb2" class="t " style="font-size:13px;color:#222;left:327px;top:902.5px;transform-origin:0 50%;transform:scaleX(0.9792);">Idő formátum számként</span>
<div class="a" style="left:1727px;top:943px;width:2px;height:2px;background:#111;"></div>
</body></html>
